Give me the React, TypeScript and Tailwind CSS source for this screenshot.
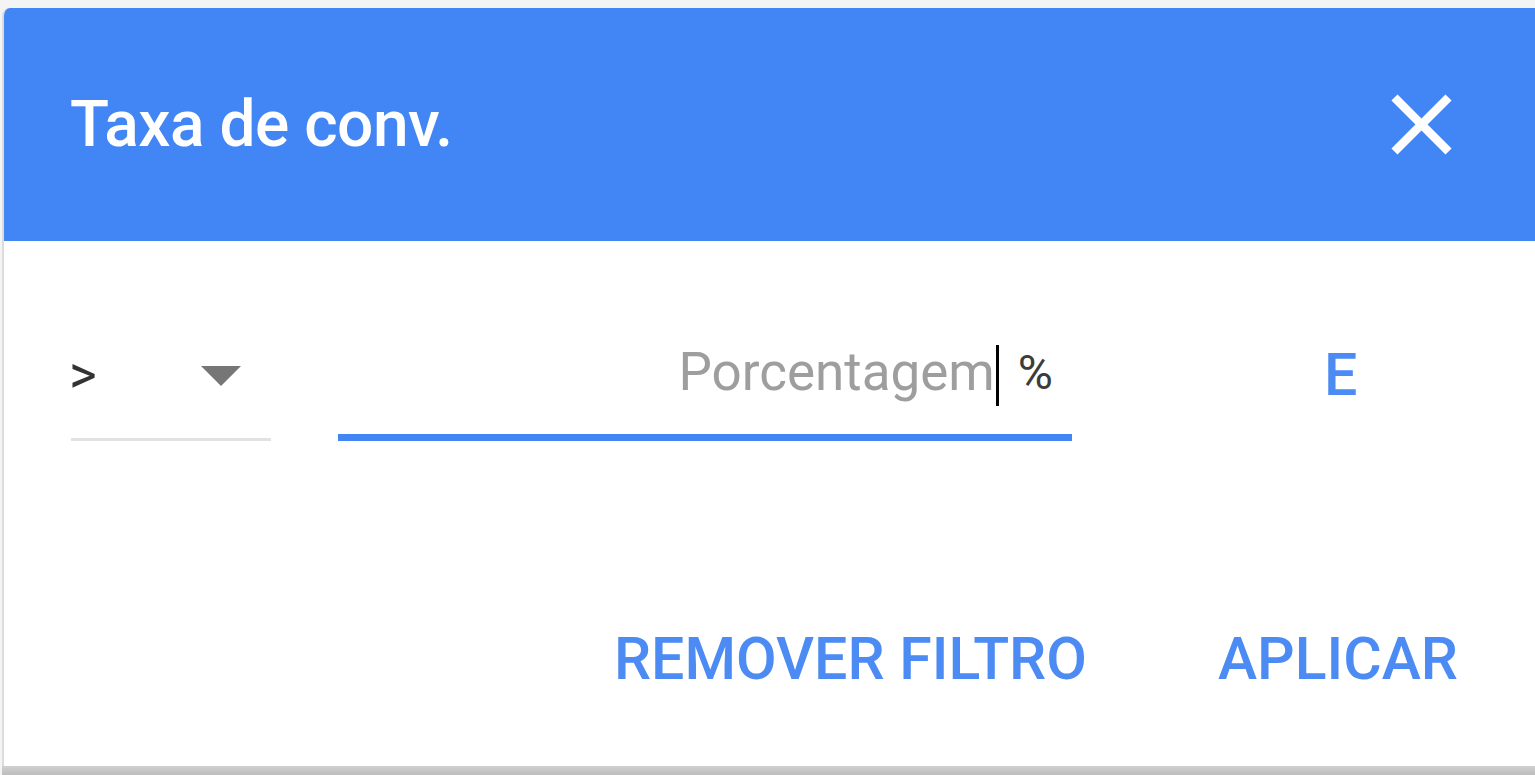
import React from "react";

export default function App() {
  return (
    <div
      className="w-[1535px] h-[775px] overflow-hidden bg-[#f4f4f4] flex flex-col pt-[8px] pl-[2px]"
      style={{ fontFamily: "Roboto, 'Noto Sans', Arial, sans-serif" }}
    >
      <div className="flex-1 flex flex-col bg-white rounded-tl-[8px] border-l-[2px] border-[#dcdcdc] overflow-hidden">
        <div className="h-[233px] bg-[#4285f4] flex items-center justify-between pl-[66px] pr-[62px] shrink-0">
          <span className="text-white text-[64px] font-medium leading-none tracking-[-0.5px]">Taxa de conv.</span>
          <svg width="103" height="103" viewBox="0 0 24 24" fill="#ffffff">
            <path d="M19 6.41L17.59 5 12 10.59 6.41 5 5 6.41 10.59 12 5 17.59 6.41 19 12 13.41 17.59 19 19 17.59 13.41 12z" />
          </svg>
        </div>
        <div className="flex items-end pl-[67px] mt-[75px]">
          <div className="w-[200px] h-[124px] flex items-center justify-between border-b-[3px] border-[#e2e2e2] pr-[30px]">
            <span className="text-[53px] text-[#333333] leading-none -ml-[2px] -mt-[4px]">&gt;</span>
            <svg width="40" height="20" viewBox="0 0 10 5" className="-mt-[3px]">
              <path d="M0 0 L10 0 L5 5 Z" fill="#767676" />
            </svg>
          </div>
          <div className="ml-[67px] w-[734px] h-[125px] flex items-center justify-end border-b-[7px] border-[#4285f4] pr-[19px]">
            <span className="text-[53px] text-[#9e9e9e] leading-none -mt-[5px]">Porcentagem</span>
            <span className="w-[3px] h-[61px] bg-black ml-[1px]" />
            <span className="text-[48px] text-[#3c3c3c] leading-none ml-[19px] -mt-[4px]">%</span>
          </div>
          <div className="ml-[252px] h-[125px] flex items-center">
            <span className="text-[59px] font-medium text-[#4d8bf4] leading-none -mt-[8px]">E</span>
          </div>
        </div>
        <div className="flex justify-end items-center pr-[77px] mt-[188px] gap-[131px]">
          <span className="text-[59px] font-medium text-[#4d8bf4] leading-none">REMOVER FILTRO</span>
          <span className="text-[59px] font-medium text-[#4d8bf4] leading-none">APLICAR</span>
        </div>
      </div>
      <div className="h-[9px] shrink-0 bg-gradient-to-b from-[#d0d0d0] to-[#bdbdbd]" />
    </div>
  );
}
